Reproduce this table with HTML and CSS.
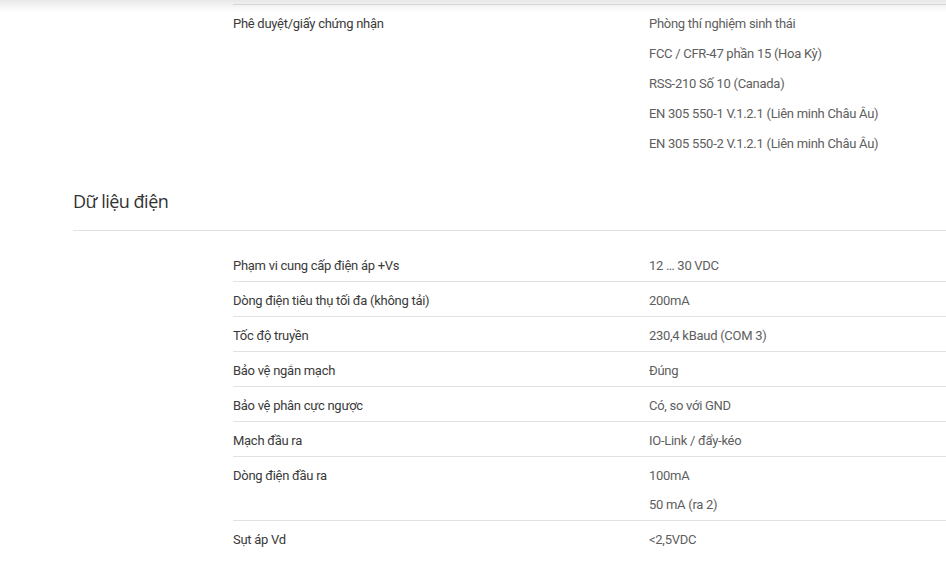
FILE: index.html
```html
<!DOCTYPE html>
<html lang="vi">
<head>
<meta charset="utf-8">
<title>Thông số kỹ thuật</title>
<link rel="stylesheet" href="styles.css">
</head>
<body>
<div class="top-shadow"></div>
<main class="page">
  <div class="spec-table spec-table--continued">
    <div class="row">
      <div class="label">Phê duyệt/giấy chứng nhận</div>
      <div class="value">
        <div class="line">Phòng thí nghiệm sinh thái</div>
        <div class="line">FCC / CFR-47 phần 15 (Hoa Kỳ)</div>
        <div class="line">RSS-210 Số 10 (Canada)</div>
        <div class="line">EN 305 550-1 V.1.2.1 (Liên minh Châu Âu)</div>
        <div class="line">EN 305 550-2 V.1.2.1 (Liên minh Châu Âu)</div>
      </div>
    </div>
  </div>

  <h2 class="section-title">Dữ liệu điện</h2>

  <div class="spec-table">
    <div class="row">
      <div class="label">Phạm vi cung cấp điện áp +Vs</div>
      <div class="value"><div class="line">12 … 30 VDC</div></div>
    </div>
    <div class="row">
      <div class="label">Dòng điện tiêu thụ tối đa (không tải)</div>
      <div class="value"><div class="line">200mA</div></div>
    </div>
    <div class="row">
      <div class="label">Tốc độ truyền</div>
      <div class="value"><div class="line">230,4 kBaud (COM 3)</div></div>
    </div>
    <div class="row">
      <div class="label">Bảo vệ ngắn mạch</div>
      <div class="value"><div class="line">Đúng</div></div>
    </div>
    <div class="row">
      <div class="label">Bảo vệ phân cực ngược</div>
      <div class="value"><div class="line">Có, so với GND</div></div>
    </div>
    <div class="row">
      <div class="label">Mạch đầu ra</div>
      <div class="value"><div class="line">IO-Link / đẩy-kéo</div></div>
    </div>
    <div class="row">
      <div class="label">Dòng điện đầu ra</div>
      <div class="value">
        <div class="line">100mA</div>
        <div class="line">50 mA (ra 2)</div>
      </div>
    </div>
    <div class="row">
      <div class="label">Sụt áp Vd</div>
      <div class="value"><div class="line">&lt;2,5VDC</div></div>
    </div>
  </div>
</main>
</body>
</html>
```

FILE: styles.css
```css
html, body {
  margin: 0;
  padding: 0;
  background: #ffffff;
  overflow: hidden;
}

body {
  font-family: Roboto, "Liberation Sans", sans-serif;
  font-size: 13px;
  letter-spacing: -0.28px;
  color: #333333;
}

.top-shadow {
  position: absolute;
  top: 0;
  left: 0;
  right: 0;
  height: 12px;
  background: linear-gradient(to bottom, rgba(0, 0, 0, 0.09), rgba(0, 0, 0, 0));
  pointer-events: none;
}

.page {
  padding: 4px 0 0 73px;
}

.spec-table {
  margin-left: 160px;
}

.spec-table--continued {
  border-top: 1px solid #e2e2e2;
  margin-bottom: 28px;
}

.section-title {
  margin: 0 0 16px 0;
  padding: 0 0 15px 0;
  font-family: "Open Sans", "Noto Sans", sans-serif;
  font-weight: 400;
  font-size: 18px;
  letter-spacing: -0.5px;
  line-height: 28px;
  color: #333333;
  border-bottom: 1px solid #e2e2e2;
}

.row {
  display: grid;
  grid-template-columns: 416px 1fr;
  padding-top: 4px;
  line-height: 30px;
}

.row + .row {
  border-top: 1px solid #e2e2e2;
}

.line + .line {
  margin-top: -1px;
}

.spec-table--continued .line + .line {
  margin-top: 0;
}

.label {
  color: #3a3a3a;
}

.value {
  color: #5e5e5e;
}
```
